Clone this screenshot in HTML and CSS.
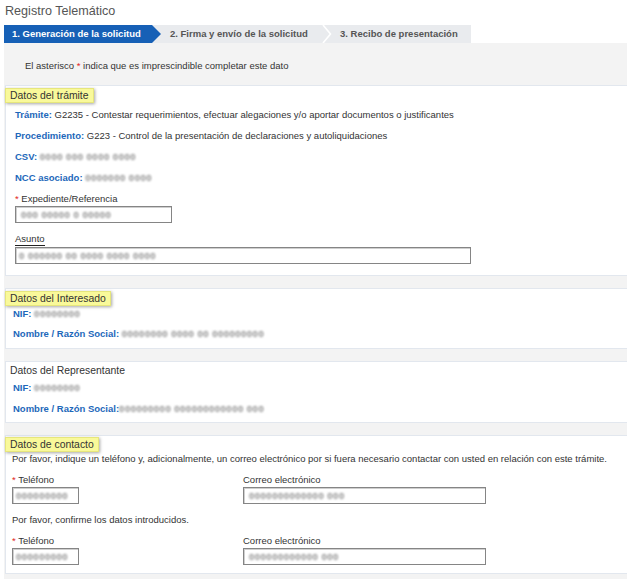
FILE: index.html
```html
<!DOCTYPE html>
<html lang="es">
<head>
<meta charset="utf-8">
<title>Registro Telemático</title>
<link rel="stylesheet" href="styles.css">
</head>
<body>
<div class="page">
  <h1 class="title">Registro Telemático</h1>
  <div class="steps">
    <div class="step active">1. Generación de la solicitud</div>
    <div class="step step2">2. Firma y envío de la solicitud</div>
    <svg class="chev" width="10" height="18" viewBox="0 0 10 18"><polyline points="1,0 8.5,9 1,18" fill="none" stroke="#ffffff" stroke-width="1.6"/></svg>
    <div class="step step3">3. Recibo de presentación</div>
  </div>
  <div class="content">
    <p class="note">El asterisco <span class="req">*</span> indica que es imprescindible completar este dato</p>

    <section class="box box1">
      <div class="tag">Datos del trámite</div>
      <div class="row r-first"><b class="lbl">Trámite:</b> G2235 - Contestar requerimientos, efectuar alegaciones y/o aportar documentos o justificantes</div>
      <div class="row"><b class="lbl">Procedimiento:</b> G223 - Control de la presentación de declaraciones y autoliquidaciones</div>
      <div class="row"><b class="lbl">CSV:</b> <span class="blur">0000 000 0000 0000</span></div>
      <div class="row"><b class="lbl">NCC asociado:</b> <span class="blur">0000000 0000</span></div>
      <div class="row"><span class="req">*</span> Expediente/Referencia</div>
      <div class="field f-exp"><span class="blur">000 00000 0 00000</span></div>
      <div class="row r-asunto"><span class="ul">Asunto</span></div>
      <div class="field f-asunto"><span class="blur">0 000000 00 0000 0000 0000</span></div>
    </section>

    <section class="box box2">
      <div class="tag">Datos del Interesado</div>
      <div class="row r-nif"><b class="lbl">NIF:</b> <span class="blur">00000000</span></div>
      <div class="row r-nom"><b class="lbl">Nombre / Razón Social:</b> <span class="blur">00000000 0000 00 000000000</span></div>
    </section>

    <section class="box box3">
      <div class="rep">Datos del Representante</div>
      <div class="row r-nif3"><b class="lbl">NIF:</b> <span class="blur">00000000</span></div>
      <div class="row r-nom"><b class="lbl">Nombre / Razón Social:</b><span class="blur">000000000 000000000000 000</span></div>
    </section>

    <section class="box box4">
      <div class="tag">Datos de contacto</div>
      <div class="row r-intro">Por favor, indique un teléfono y, adicionalmente, un correo electrónico por si fuera necesario contactar con usted en relación con este trámite.</div>
      <div class="pair">
        <div class="col-tel">
          <div class="row r-lab"><span class="req">*</span> Teléfono</div>
          <div class="field f-tel"><span class="blur">000000000</span></div>
        </div>
        <div class="col-mail">
          <div class="row r-lab">Correo electrónico</div>
          <div class="field f-mail"><span class="blur">0000000000000 000</span></div>
        </div>
      </div>
      <div class="row r-conf">Por favor, confirme los datos introducidos.</div>
      <div class="pair">
        <div class="col-tel">
          <div class="row r-lab"><span class="req">*</span> Teléfono</div>
          <div class="field f-tel"><span class="blur">000000000</span></div>
        </div>
        <div class="col-mail">
          <div class="row r-lab">Correo electrónico</div>
          <div class="field f-mail"><span class="blur">000000000000 000</span></div>
        </div>
      </div>
    </section>
  </div>
</div>
</body>
</html>
```

FILE: styles.css
```css
html, body {
  margin: 0;
  padding: 0;
  background: #ffffff;
  overflow: hidden;
}
body {
  font-family: "Liberation Sans", Arial, sans-serif;
  font-size: 9.5px;
  color: #333333;
}
.page {
  padding-left: 4px;
}
.title {
  margin: 0 0 3px 1px;
  font-size: 12.6px;
  font-weight: normal;
  line-height: 22px;
  color: #555555;
}
.steps {
  display: flex;
  align-items: center;
  width: 467px;
  height: 18px;
  background: #e9ebee;
}
.step {
  line-height: 18px;
  font-weight: bold;
  color: #555555;
  white-space: nowrap;
}
.step.active {
  width: 157px;
  padding-left: 8px;
  box-sizing: border-box;
  background: #1660b6;
  color: #ffffff;
  clip-path: polygon(0 0, 148px 0, 100% 50%, 148px 100%, 0 100%);
}
.step2 {
  width: 161px;
  padding-left: 9px;
  box-sizing: border-box;
}
.chev {
  display: block;
  flex: none;
}
.step3 {
  padding-left: 8px;
}
.content {
  background: #f3f3f3;
  margin-right: -6px;
  padding: 16px 0 8px 1px;
}
.note {
  margin: 0 0 12px 20px;
  line-height: 14px;
}
.req {
  color: #e2261d;
}
.box {
  background: #ffffff;
  border: 1px solid #e2e7ee;
  margin-bottom: 12px;
}
.tag {
  display: block;
  width: fit-content;
  margin-top: 1px;
  padding: 0 4px;
  height: 13px;
  line-height: 13px;
  font-size: 10.4px;
  color: #333333;
  background: #f9f99a;
  border: 1px solid #e6e67c;
  box-shadow: 1px 1px 3px rgba(0, 0, 0, 0.35);
}
.row {
  line-height: 14px;
  white-space: nowrap;
}
.lbl {
  color: #1d68ba;
}
.blur {
  color: #8a8a8a;
  filter: blur(0.9px);
  letter-spacing: 0.5px;
  font-weight: bold;
}
.box1 {
  padding: 1px 0 11px 9px;
}
.box1 .tag {
  margin-left: -10px;
}
.box1 .row {
  margin-top: 7px;
}
.box1 .row.r-first {
  margin-top: 5px;
}
.box1 .row.r-asunto {
  margin-top: 9px;
  line-height: 13px;
}
.ul {
  display: inline-block;
  border-bottom: 1px solid #222222;
  line-height: 12px;
}
.field {
  box-sizing: border-box;
  height: 17px;
  line-height: 15px;
  padding-left: 5px;
  border: 1px solid #858585;
  box-shadow: inset 1px 1px 0 #cfcfcf;
  background: #ffffff;
  overflow: hidden;
  white-space: nowrap;
}
.f-exp {
  width: 157px;
}
.f-asunto {
  width: 456px;
  margin-top: 1px;
  padding-left: 3px;
}
.box2 {
  padding: 1px 0 7px 7px;
}
.box2 .tag {
  margin-left: -8px;
}
.r-nif {
  margin-top: 1px;
}
.r-nom {
  margin-top: 6px;
}
.box3 {
  padding: 2px 0 6px 7px;
}
.rep {
  margin-left: -3px;
  font-size: 10.4px;
  line-height: 14px;
}
.r-nif3 {
  margin-top: 3px;
}
.box3 .r-nom {
  margin-top: 7px;
}
.box4 {
  padding: 0 0 8px 6px;
}
.box4 .tag {
  margin-left: -7px;
}
.r-intro {
  margin-top: 0;
}
.pair {
  display: flex;
  margin-top: 7px;
}
.col-tel {
  width: 231px;
}
.r-lab {
  line-height: 13px;
}
.f-tel {
  width: 67px;
  margin-top: 1px;
  padding-left: 3px;
}
.f-mail {
  width: 243px;
  margin-top: 1px;
  padding-left: 5px;
}
.r-conf {
  margin-top: 9px;
}
```
